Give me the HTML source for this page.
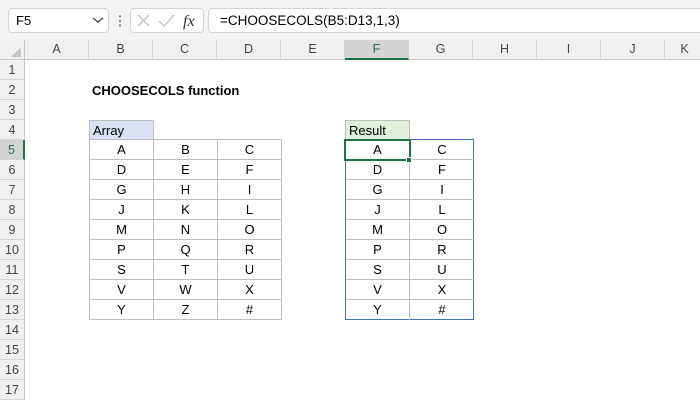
<!DOCTYPE html>
<html><head><style>
*{margin:0;padding:0;box-sizing:border-box}
body{width:700px;height:400px;overflow:hidden;background:#fff;font-family:"Liberation Sans",Arial,sans-serif;font-size:13px;color:#000;position:relative}
.a{position:absolute}
.top{left:0;top:0;width:700px;height:40px;background:#f3f3f3}
.box{background:#fff;border:1px solid #d4d4d4;border-radius:4px}
.ch{top:40px;height:20px;background:#f0f0f0;border-right:1px solid #d4d4d4;border-bottom:1px solid #c8c8c8;text-align:center;line-height:19px;color:#444;font-size:12.5px}
.rh{left:0;width:25px;height:20px;background:#f0f0f0;border-bottom:1px solid #d4d4d4;border-right:1px solid #c8c8c8;text-align:center;line-height:20px;color:#444;font-size:12.5px}
.c{height:20px;width:64px;border-right:1px solid #bfbfbf;border-bottom:1px solid #bfbfbf;text-align:center;line-height:20px}
</style></head><body>
<div class="a top"></div>
<div class="a box" style="left:8px;top:8px;width:101px;height:25px;padding-left:7px;line-height:23px">F5</div>
<svg class="a" style="left:92px;top:16px" width="12" height="8"><path d="M1 2 L6 6 L11 2" stroke="#444" stroke-width="1.3" fill="none"/></svg>
<div class="a" style="left:119px;top:14px;width:2px;height:14px;background:radial-gradient(circle,#888 45%,transparent 50%) 0 0/2px 4.6px"></div>
<div class="a box" style="left:130px;top:8px;width:74px;height:25px"></div>
<svg class="a" style="left:136px;top:12px" width="64" height="18"><path d="M2 3 L13 14 M13 3 L2 14" stroke="#bbb" stroke-width="1.2"/><path d="M23 9 L28 14 L38 3" stroke="#bbb" stroke-width="1.2" fill="none"/><text x="47" y="14" font-family="Liberation Serif" font-style="italic" font-size="16" fill="#333">fx</text></svg>
<div class="a box" style="left:208px;top:8px;width:500px;height:25px;padding-left:11px;line-height:23px;font-size:13.5px">=CHOOSECOLS(B5:D13,1,3)</div>

<div class="a" style="left:0;top:40px;width:25px;height:20px;background:#f0f0f0;border-right:1px solid #c8c8c8;border-bottom:1px solid #c8c8c8"></div>
<svg class="a" style="left:10px;top:46px" width="12" height="12"><path d="M11 1 L11 11 L1 11Z" fill="#c6c6c6"/></svg>
<div class="a ch" style="left:25px;width:64px">A</div>
<div class="a ch" style="left:89px;width:64px">B</div>
<div class="a ch" style="left:153px;width:64px">C</div>
<div class="a ch" style="left:217px;width:64px">D</div>
<div class="a ch" style="left:281px;width:64px">E</div>
<div class="a ch" style="left:345px;width:64px;background:#d3d3d3;border-bottom:2px solid #217346;color:#217346">F</div>
<div class="a ch" style="left:409px;width:64px">G</div>
<div class="a ch" style="left:473px;width:64px">H</div>
<div class="a ch" style="left:537px;width:64px">I</div>
<div class="a ch" style="left:601px;width:64px">J</div>
<div class="a ch" style="left:665px;width:40px">K</div>

<div class="a rh" style="top:60px">1</div><div class="a rh" style="top:80px">2</div><div class="a rh" style="top:100px">3</div><div class="a rh" style="top:120px">4</div>
<div class="a rh" style="top:140px;background:#d3d3d3;border-right:2px solid #217346;color:#217346">5</div>
<div class="a rh" style="top:160px">6</div><div class="a rh" style="top:180px">7</div><div class="a rh" style="top:200px">8</div><div class="a rh" style="top:220px">9</div><div class="a rh" style="top:240px">10</div><div class="a rh" style="top:260px">11</div><div class="a rh" style="top:280px">12</div><div class="a rh" style="top:300px">13</div><div class="a rh" style="top:320px">14</div><div class="a rh" style="top:340px">15</div><div class="a rh" style="top:360px">16</div><div class="a rh" style="top:380px">17</div>

<div class="a" style="left:92px;top:82px;font-weight:bold;line-height:18px">CHOOSECOLS function</div>
<div class="a" style="left:89px;top:120px;width:65px;height:20px;background:#d9e1f2;border:1px solid #bfbfbf;padding-left:3px;line-height:19px">Array</div>
<div class="a" style="left:345px;top:120px;width:65px;height:20px;background:#e2efda;border:1px solid #bfbfbf;padding-left:3px;line-height:19px">Result</div>

<div class="a" style="left:89px;top:139px;width:193px;height:181px;border-left:1px solid #bfbfbf;border-top:1px solid #bfbfbf">
<div style="display:grid;grid-template-columns:64px 64px 64px">
<div class="c">A</div><div class="c">B</div><div class="c">C</div>
<div class="c">D</div><div class="c">E</div><div class="c">F</div>
<div class="c">G</div><div class="c">H</div><div class="c">I</div>
<div class="c">J</div><div class="c">K</div><div class="c">L</div>
<div class="c">M</div><div class="c">N</div><div class="c">O</div>
<div class="c">P</div><div class="c">Q</div><div class="c">R</div>
<div class="c">S</div><div class="c">T</div><div class="c">U</div>
<div class="c">V</div><div class="c">W</div><div class="c">X</div>
<div class="c">Y</div><div class="c">Z</div><div class="c">#</div>
</div></div>

<div class="a" style="left:345px;top:139px;width:129px;height:181px;border:1px solid #4472c4;border-right:1px solid #4472c4">
<div style="display:grid;grid-template-columns:64px 63px">
<div class="c">A</div><div class="c" style="border-right:0">C</div>
<div class="c">D</div><div class="c" style="border-right:0">F</div>
<div class="c">G</div><div class="c" style="border-right:0">I</div>
<div class="c">J</div><div class="c" style="border-right:0">L</div>
<div class="c">M</div><div class="c" style="border-right:0">O</div>
<div class="c">P</div><div class="c" style="border-right:0">R</div>
<div class="c">S</div><div class="c" style="border-right:0">U</div>
<div class="c">V</div><div class="c" style="border-right:0">X</div>
<div class="c" style="border-bottom:0">Y</div><div class="c" style="border-right:0;border-bottom:0">#</div>
</div></div>
<div class="a" style="left:344px;top:139px;width:67px;height:22px;border:2px solid #217346"></div>
<div class="a" style="left:406px;top:157px;width:6px;height:6px;background:#217346;border:1px solid #fff"></div>
</body></html>
